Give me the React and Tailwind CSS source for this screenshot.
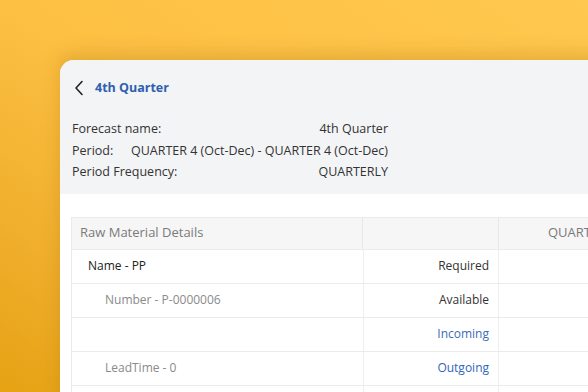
export default function App() {
    const info = [
        ["Forecast name:", "4th Quarter"],
        ["Period:", "QUARTER 4 (Oct-Dec) - QUARTER 4 (Oct-Dec)"],
        ["Period Frequency:", "QUARTERLY"],
    ];
    const rows = [
        { label: "Name - PP", indent: "pl-[16px] text-[#222]", kind: "Required", tone: "text-[#333]" },
        { label: "Number - P-0000006", indent: "pl-[33px] text-[#8a8a8a]", kind: "Available", tone: "text-[#333]" },
        { label: "", indent: "pl-[33px] text-[#8a8a8a]", kind: "Incoming", tone: "text-[#3a6db5]" },
        { label: "LeadTime - 0", indent: "pl-[33px] text-[#8a8a8a]", kind: "Outgoing", tone: "text-[#2f66b9]" },
        { label: "", indent: "pl-[33px] text-[#8a8a8a]", kind: "", tone: "" },
    ];

    return (
        <div className="w-[588px] h-[392px] overflow-hidden bg-gradient-to-bl from-[#ffc84e] via-[#fdc043] to-[#e6a212] font-['Open_Sans',sans-serif]">
            <div className="ml-[60px] mt-[60px] w-[700px] h-[400px] rounded-tl-[14px] bg-white overflow-hidden shadow-[0_-6px_18px_rgba(150,100,0,0.25)]">
                <section className="bg-[#f3f4f6] pt-[18px] pb-[11px]">
                    <div className="flex items-center h-[20px] pl-[14px]">
                        <svg width="12" height="16" viewBox="0 0 12 16" fill="none" stroke="#222" strokeWidth="1.6" strokeLinecap="round" strokeLinejoin="round">
                            <polyline points="8,1.5 2,8 8,14.5" />
                        </svg>
                        <h1 className="ml-[9px] text-[12.5px] font-bold text-[#2f5fae]">4th Quarter</h1>
                    </div>
                    <div className="mt-[20px] pl-[12px] w-[328px] text-[12.5px] text-[#333] leading-[21.5px]">
                        {info.map(([k, v]) => (
                            <div key={k} className="flex justify-between">
                                <span>{k}</span>
                                <span>{v}</span>
                            </div>
                        ))}
                    </div>
                </section>
                <section className="pt-[23px] pl-[11px]">
                    <div className="border border-[#ebebeb] text-[12px]">
                        <div className="grid grid-cols-[291px_136px_1fr] h-[31px] bg-[#f6f6f6] text-[#7a7a7a] text-[13px]">
                            <div className="flex items-center pl-[8px] border-r border-[#e9e9e9]">Raw Material Details</div>
                            <div className="border-r border-[#e9e9e9]"></div>
                            <div className="flex items-center pl-[49px]">QUARTER 4 (Oct-Dec)</div>
                        </div>
                        {rows.map((r, i) => (
                            <div key={i} className="grid grid-cols-[291px_136px_1fr] h-[34px] border-t border-[#ebebeb]">
                                <div className={"flex items-center " + r.indent}>{r.label}</div>
                                <div className={"flex items-center justify-end pr-[9px] border-x border-[#eeeeee] " + r.tone}>{r.kind}</div>
                                <div></div>
                            </div>
                        ))}
                    </div>
                </section>
            </div>
        </div>
    );
}
